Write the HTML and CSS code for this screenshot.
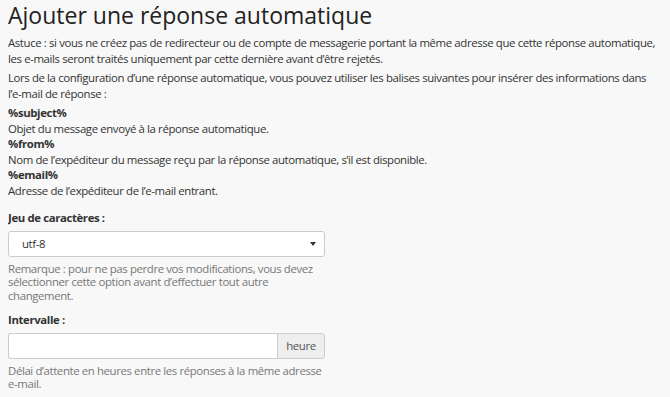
FILE: index.html
```html
<!DOCTYPE html>
<html lang="fr">
  <head>
    <title>Ajouter une réponse automatique</title>
    <link rel="stylesheet" href="styles.css">
  </head>
  <body>
    <h1>Ajouter une réponse automatique</h1>
    <p class="intro">Astuce : si vous ne créez pas de redirecteur ou de compte de messagerie portant la même adresse que cette réponse automatique, les e-mails seront traités uniquement par cette dernière avant d’être rejetés.</p>
    <p class="intro">Lors de la configuration d’une réponse automatique, vous pouvez utiliser les balises suivantes pour insérer des informations dans l’e-mail de réponse :</p>

    <dl class="tags">
      <dt>%subject%</dt>
      <dd>Objet du message envoyé à la réponse automatique.</dd>
      <dt>%from%</dt>
      <dd>Nom de l’expéditeur du message reçu par la réponse automatique, s’il est disponible.</dd>
      <dt>%email%</dt>
      <dd>Adresse de l’expéditeur de l’e-mail entrant.</dd>
    </dl>

    <div class="form-group">
      <label for="charset">Jeu de caractères :</label>
      <div class="select-box">
        <select id="charset">
          <option>utf-8</option>
        </select>
        <span class="caret"></span>
      </div>
      <p class="help">Remarque : pour ne pas perdre vos modifications, vous devez sélectionner cette option avant d’effectuer tout autre changement.</p>
    </div>

    <div class="form-group">
      <label for="interval">Intervalle :</label>
      <div class="input-group">
        <input type="text" id="interval">
        <span class="addon">heure</span>
      </div>
      <p class="help">Délai d’attente en heures entre les réponses à la même adresse <span class="nowrap">e-mail.</span></p>
    </div>
  </body>
</html>
```

FILE: styles.css
```css
body {
  margin: 3px 8px 8px 8px;
  background-color: #f8f8f8;
  color: #333;
  font-family: "Open Sans", "Liberation Sans", sans-serif;
  font-size: 11.4px;
  line-height: 15.5px;
  letter-spacing: -0.38px;
}
h1 {
  margin: 0 0 7px 0;
  font-size: 23px;
  font-weight: 400;
  line-height: 25px;
  letter-spacing: 0;
  color: #222;
}
.intro {
  margin: 0 0 4px 0;
}
.tags {
  margin: 0;
}
.tags dt {
  font-weight: 700;
}
.tags dd {
  margin: 0;
}
.form-group {
  margin-top: 12px;
  width: 322px;
}
.form-group + .form-group {
  margin-top: 10px;
}
.form-group label {
  display: block;
  font-weight: 700;
  margin-bottom: 5px;
}
.select-box {
  position: relative;
  width: 317px;
}
.select-box select {
  appearance: none;
  display: block;
  width: 100%;
  height: 26px;
  padding: 0 13px;
  border: 1px solid #ccc;
  border-radius: 3px;
  background-color: #fff;
  color: #333;
  font-family: inherit;
  font-size: 11.4px;
  letter-spacing: -0.38px;
}
.caret {
  position: absolute;
  right: 9px;
  top: 11px;
  border-left: 3px solid transparent;
  border-right: 3px solid transparent;
  border-top: 4px solid #333;
}
.help {
  margin: 5px 0 0 0;
  color: #777;
  line-height: 13.5px;
}
.nowrap {
  white-space: nowrap;
}
.input-group {
  display: flex;
  width: 317px;
}
.input-group input {
  flex: 1;
  min-width: 0;
  height: 26px;
  box-sizing: border-box;
  border: 1px solid #ccc;
  border-right: none;
  border-radius: 3px 0 0 3px;
  background-color: #fff;
}
.addon {
  display: flex;
  align-items: center;
  width: 48px;
  justify-content: center;
  height: 26px;
  box-sizing: border-box;
  border: 1px solid #ccc;
  border-radius: 0 3px 3px 0;
  background-color: #eee;
  color: #555;
}
```
